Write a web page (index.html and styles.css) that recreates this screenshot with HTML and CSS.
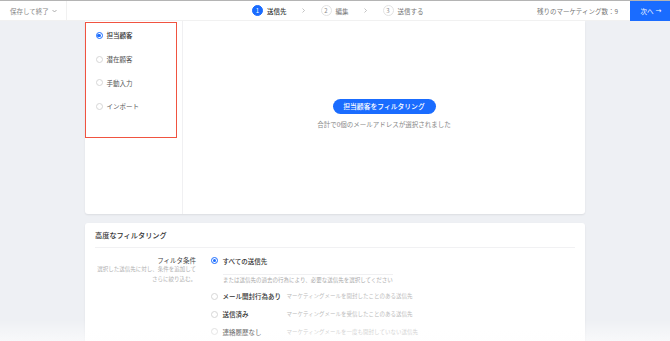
FILE: index.html
```html
<!DOCTYPE html>
<html lang="ja">
<head>
<meta charset="utf-8">
<title>送信先</title>
<link rel="stylesheet" href="styles.css">
</head>
<body>
<header class="topbar">
  <div class="save">保存して終了
    <svg class="caret" width="5" height="4" viewBox="0 0 5 4"><path d="M0.5 1 L2.5 3 L4.5 1" fill="none" stroke="#999" stroke-width="0.8"/></svg>
  </div>
  <nav class="steps">
    <div class="step active"><span class="num">1</span><span class="label">送信先</span></div>
    <svg class="chev" width="3" height="5" viewBox="0 0 3 5"><path d="M0.5 0.5 L2.5 2.5 L0.5 4.5" fill="none" stroke="#aaa" stroke-width="0.7"/></svg>
    <div class="step"><span class="num">2</span><span class="label">編集</span></div>
    <svg class="chev" width="3" height="5" viewBox="0 0 3 5"><path d="M0.5 0.5 L2.5 2.5 L0.5 4.5" fill="none" stroke="#aaa" stroke-width="0.7"/></svg>
    <div class="step"><span class="num">3</span><span class="label">送信する</span></div>
  </nav>
  <div class="remain">残りのマーケティング数：9</div>
  <button class="next">次へ <span class="arrow">→</span></button>
</header>

<main class="content">
  <section class="card card-top">
    <div class="sidecol">
      <div class="sourcebox">
        <div class="src"><span class="radio on"></span><span class="src-label">担当顧客</span></div>
        <div class="src"><span class="radio"></span><span class="src-label">潜在顧客</span></div>
        <div class="src"><span class="radio"></span><span class="src-label">手動入力</span></div>
        <div class="src"><span class="radio"></span><span class="src-label">インポート</span></div>
      </div>
    </div>
    <div class="maincol">
      <button class="filter-btn">担当顧客をフィルタリング</button>
      <p class="summary">合計で0個のメールアドレスが選択されました</p>
    </div>
  </section>

  <section class="card card-adv">
    <h2 class="adv-title">高度なフィルタリング</h2>
    <div class="form-row">
      <div class="form-label">
        <div class="lbl">フィルタ条件</div>
        <div class="lbl-sub">選択した送信先に対し、条件を追加して</div>
        <div class="lbl-sub">さらに絞り込む。</div>
      </div>
      <div class="form-opts">
        <div class="opt-main"><span class="radio on"></span><span class="opt-label">すべての送信先</span></div>
        <div class="opt-hint">または送信先の過去の行為により、必要な送信先を選択してください</div>
        <div class="opt"><span class="radio"></span><span class="opt-name">メール開封行為あり</span><span class="opt-desc">マーケティングメールを開封したことのある送信先</span></div>
        <div class="opt"><span class="radio"></span><span class="opt-name">送信済み</span><span class="opt-desc">マーケティングメールを受信したことのある送信先</span></div>
        <div class="opt"><span class="radio"></span><span class="opt-name">連絡履歴なし</span><span class="opt-desc">マーケティングメールを一度も開封していない送信先</span></div>
      </div>
    </div>
  </section>
</main>
<div class="fade"></div>
</body>
</html>
```

FILE: styles.css
```css
* { box-sizing: border-box; }
html, body {
  margin: 0;
  padding: 0;
}
body {
  width: 670px;
  height: 341px;
  overflow: hidden;
  background: #eef0f4;
  font-family: "Noto Sans CJK JP", "Noto Sans", sans-serif;
  color: #333;
}

/* header */
.topbar {
  height: 21px;
  background: #fff;
  border-top: 1px solid #b4b4b4;
  border-bottom: 1px solid #f1f1f1;
  display: flex;
  align-items: center;
  position: relative;
  z-index: 2;
}
.save {
  width: 67px;
  height: 100%;
  padding-left: 10px;
  display: flex;
  align-items: center;
  gap: 3px;
  font-size: 6.5px;
  color: #888;
  border-right: 1px solid #f1f1f1;
}
.caret { margin-top: 1px; }
.steps {
  display: flex;
  align-items: center;
  margin-left: 185px;
  gap: 15.5px;
}
.step {
  display: flex;
  align-items: center;
  gap: 4px;
  font-size: 6.5px;
  color: #777;
}
.step .num {
  width: 11px;
  height: 11px;
  border-radius: 50%;
  border: 1px solid #e3e3e3;
  display: flex;
  align-items: center;
  justify-content: center;
  font-size: 6px;
  color: #888;
}
.step.active .num {
  background: #1a6cff;
  border-color: #1a6cff;
  color: #fff;
}
.step.active .label { color: #333; font-weight: 500; }
.remain {
  margin-left: auto;
  margin-right: 12px;
  font-size: 6.5px;
  color: #777;
}
.next {
  width: 40px;
  height: 20px;
  align-self: flex-start;
  border: 0;
  background: #1a6cff;
  color: #fff;
  font-family: inherit;
  font-size: 6.5px;
  padding: 0 0 0 2px;
  display: flex;
  align-items: center;
  justify-content: center;
  gap: 2px;
}
.next .arrow { font-size: 7px; font-family: "DejaVu Sans", sans-serif; }

/* content */
.content {
  padding: 0 85px;
  display: flex;
  flex-direction: column;
  gap: 9px;
}
.card {
  background: #fff;
  border-radius: 3px;
  box-shadow: 0 1px 2px rgba(0, 0, 0, 0.08);
}
.card-top {
  height: 193px;
  display: flex;
  border-top-left-radius: 0;
  border-top-right-radius: 0;
}
.sidecol {
  width: 98px;
  border-right: 1px solid #f0f0f2;
  padding-top: 1px;
}
.sourcebox {
  width: 92px;
  height: 116px;
  border: 1.7px solid #f05340;
  padding: 0.7px 0 0 9.5px;
}
.src {
  height: 23.6px;
  display: flex;
  align-items: center;
  gap: 4px;
  font-size: 6.5px;
  color: #555;
}
.src:first-child .src-label { color: #333; font-weight: 500; }
.radio {
  width: 7px;
  height: 7px;
  border-radius: 50%;
  border: 0.8px solid #d6d6d6;
  background: #fff;
  flex: none;
  position: relative;
}
.radio.on { border-color: #1a6cff; }
.radio.on::after {
  content: "";
  position: absolute;
  left: 50%;
  top: 50%;
  width: 3.4px;
  height: 3.4px;
  margin: -1.7px 0 0 -1.7px;
  border-radius: 50%;
  background: #1a6cff;
}
.maincol {
  flex: 1;
  display: flex;
  flex-direction: column;
  align-items: center;
  padding-top: 78px;
}
.filter-btn {
  width: 103px;
  height: 14.5px;
  border: 0;
  border-radius: 8px;
  background: #1a6cff;
  color: #fff;
  font-family: inherit;
  font-size: 6.8px;
  font-weight: 500;
  padding: 0;
}
.summary {
  margin: 6px 0 0;
  font-size: 6.5px;
  line-height: 9px;
  color: #888;
}

/* advanced */
.card-adv {
  height: 118px;
  overflow: hidden;
  padding: 0 10px;
  border-bottom-left-radius: 0;
  border-bottom-right-radius: 0;
}
.adv-title {
  margin: 0;
  padding: 7px 0 6.5px;
  font-size: 7.2px;
  line-height: 10px;
  font-weight: 500;
  color: #333;
  border-bottom: 1px solid #f1f1f3;
}
.form-row {
  display: flex;
  margin-top: 8.5px;
}
.form-label {
  width: 101px;
  text-align: right;
}
.lbl {
  font-size: 6.5px;
  line-height: 9px;
  color: #444;
}
.lbl-sub {
  font-size: 5.5px;
  line-height: 9.5px;
  color: #b0b0b0;
}
.form-opts {
  margin-left: 15px;
  display: flex;
  flex-direction: column;
  align-items: flex-start;
}
.opt-main {
  height: 9px;
  display: flex;
  align-items: center;
  gap: 4.5px;
  font-size: 6.5px;
  font-weight: 500;
  color: #333;
}
.opt-hint {
  margin: 8.5px 0 0 12px;
  border-top: 1px solid #f0f0f2;
  padding-top: 1.5px;
  font-size: 5.5px;
  line-height: 8.5px;
  color: #aaa;
}
.opt {
  height: 17.8px;
  display: flex;
  align-items: center;
  gap: 4.5px;
}
.opt-hint + .opt { margin-top: 3px; }
.opt-name {
  width: 56px;
  font-size: 6.5px;
  font-weight: 500;
  color: #333;
  white-space: nowrap;
}
.opt-desc {
  margin-left: 3.5px;
  font-size: 5.5px;
  color: #bbb;
}

.fade {
  position: fixed;
  left: 0;
  right: 0;
  bottom: 0;
  height: 22px;
  background: linear-gradient(to bottom, rgba(255,255,255,0), rgba(255,255,255,0.6));
  pointer-events: none;
}
```
